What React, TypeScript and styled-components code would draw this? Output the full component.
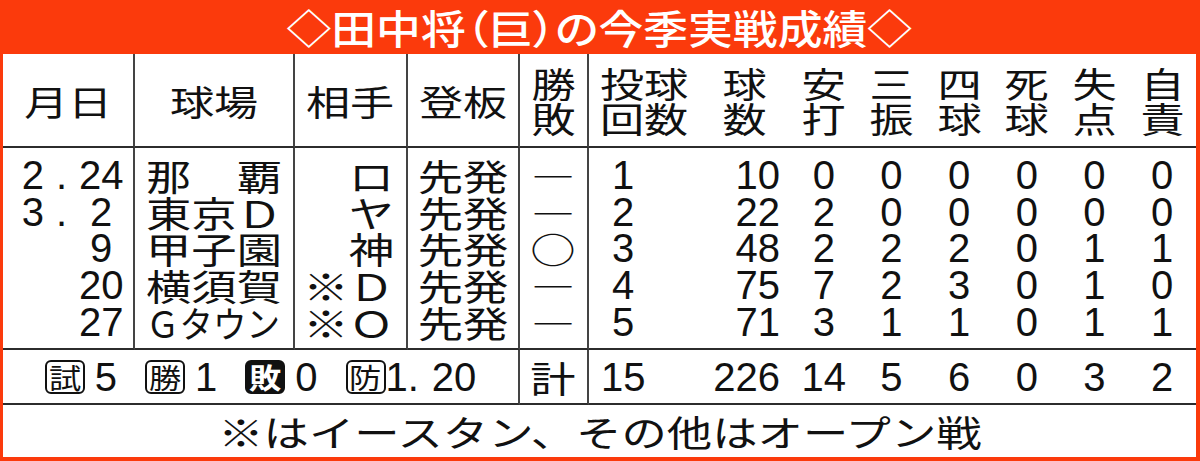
import React from 'react';
import styled, { createGlobalStyle } from 'styled-components';

const RED = '#fb3a0c';
const INK = '#111';
const RULE = '#2c2c2c';
const RULE_V = '#444';

const GlobalStyle = createGlobalStyle`
	*, *::before, *::after {
		box-sizing: border-box;
	}
	html, body {
		margin: 0;
		padding: 0;
		background: #fff;
	}
	body {
		font-family: 'Liberation Sans', 'Noto Sans CJK JP', sans-serif;
	}
`;

type Align = 'left' | 'right' | 'center';

type Game = {
	month?: string;
	day: string;
	park: string;
	parkFit?: number;
	opp: string;
	role: string;
	result: string;
	ip: string;
	pitches: string;
	hits: string;
	so: string;
	bb: string;
	hbp: string;
	runs: string;
	er: string;
};

const games: Game[] = [
	{ month: '2', day: '24', park: '那　覇', opp: 'ロ', role: '先発', result: '―', ip: '1', pitches: '10', hits: '0', so: '0', bb: '0', hbp: '0', runs: '0', er: '0' },
	{ month: '3', day: '2', park: '東京Ｄ', opp: 'ヤ', role: '先発', result: '―', ip: '2', pitches: '22', hits: '2', so: '0', bb: '0', hbp: '0', runs: '0', er: '0' },
	{ day: '9', park: '甲子園', opp: '神', role: '先発', result: '○', ip: '3', pitches: '48', hits: '2', so: '2', bb: '2', hbp: '0', runs: '1', er: '1' },
	{ day: '20', park: '横須賀', opp: '※Ｄ', role: '先発', result: '―', ip: '4', pitches: '75', hits: '7', so: '2', bb: '3', hbp: '0', runs: '1', er: '0' },
	{ day: '27', park: 'Ｇタウン', parkFit: 0.93, opp: '※Ｏ', role: '先発', result: '―', ip: '5', pitches: '71', hits: '3', so: '1', bb: '1', hbp: '0', runs: '1', er: '1' },
];

const totals = { ip: '15', pitches: '226', hits: '14', so: '5', bb: '6', hbp: '0', runs: '3', er: '2' };

const headers: string[][] = [
	['月日'],
	['球場'],
	['相手'],
	['登板'],
	['勝', '敗'],
	['投球', '回数'],
	['球', '数'],
	['安', '打'],
	['三', '振'],
	['四', '球'],
	['死', '球'],
	['失', '点'],
	['自', '責'],
];

const statKeys = ['hits', 'so', 'bb', 'hbp', 'runs', 'er'] as const;

const Frame = styled.div`
	width: 1200px;
	height: 461px;
	background: ${RED};
	padding: 0 4px 4px 3px;
	display: flex;
	flex-direction: column;
`;

const Banner = styled.div`
	flex: none;
	height: 54px;
	display: flex;
	align-items: center;
	justify-content: center;
	color: #fff;
	font-size: 40px;
	line-height: 54px;
	font-weight: 500;
	font-feature-settings: 'palt';
`;

const Sheet = styled.div`
	flex: 1;
	background: #fff;
	color: ${INK};
	display: grid;
	grid-template-columns: 132px 160px 113px 112px 69px 111px 90px repeat(6, 1fr);
	grid-template-rows: 94px 45.7px repeat(3, 36.7px) 46.7px 55px 1fr;
`;

// 平体: the paper sets its Japanese type stretched sideways
const Flat = styled.span<{ $sx?: number; $from?: Align }>`
	display: inline-block;
	font-family: 'Noto Sans CJK JP', sans-serif;
	white-space: nowrap;
	transform: scaleX(${(p) => p.$sx ?? 1.26});
	transform-origin: ${(p) => p.$from ?? 'center'};
`;

const HeadCell = styled.div<{ $ruled?: boolean }>`
	display: flex;
	align-items: center;
	justify-content: center;
	border-bottom: 2px solid ${RULE};
	border-right: ${(p) => (p.$ruled ? `2px solid ${RULE_V}` : 'none')};
`;

const HeadText = styled(Flat)`
	font-size: 35px;
	line-height: 35px;
	text-align: center;
`;

const DataCell = styled.div<{
	$align: Align;
	$ruled?: boolean;
	$first?: boolean;
	$last?: boolean;
	$inset?: number;
}>`
	text-align: ${(p) => p.$align};
	font-size: 40px;
	line-height: 36.7px;
	white-space: nowrap;
	padding-top: ${(p) => (p.$first ? 9 : 0)}px;
	padding-bottom: ${(p) => (p.$last ? 8 : 0)}px;
	padding-left: ${(p) => (p.$align === 'left' ? p.$inset ?? 0 : 0)}px;
	padding-right: ${(p) => (p.$align === 'right' ? p.$inset ?? 0 : 0)}px;
	border-right: ${(p) => (p.$ruled ? `2px solid ${RULE_V}` : 'none')};
	border-bottom: ${(p) => (p.$last ? `2px solid ${RULE}` : 'none')};

	${Flat} {
		font-size: 36px;
		vertical-align: 2px;
	}
`;

const Dot = styled.span`
	display: inline-block;
	width: 35px;
	text-align: center;
`;

const Slot = styled.span`
	display: inline-block;
	width: 44px;
	text-align: center;
`;

const Point = styled.span`
	display: inline-block;
	width: 24px;
	text-align: left;
`;

const SumCell = styled.div<{ $align: Align; $ruled?: boolean; $inset?: number; $span?: number }>`
	grid-column: ${(p) => (p.$span ? `span ${p.$span}` : 'auto')};
	display: flex;
	align-items: center;
	justify-content: ${(p) => (p.$align === 'left' ? 'flex-start' : p.$align === 'right' ? 'flex-end' : 'center')};
	padding-left: ${(p) => (p.$align === 'left' ? p.$inset ?? 0 : 0)}px;
	padding-right: ${(p) => (p.$align === 'right' ? p.$inset ?? 0 : 0)}px;
	font-size: 40px;
	line-height: 40px;
	white-space: nowrap;
	border-bottom: 2px solid ${RULE};
	border-right: ${(p) => (p.$ruled ? `2px solid ${RULE_V}` : 'none')};

	${Flat} {
		font-size: 36px;
	}
`;

const Record = styled.div`
	display: flex;
	align-items: center;
	gap: 28px;
`;

const Stat = styled.span<{ $tight?: boolean }>`
	display: inline-flex;
	align-items: center;
	gap: ${(p) => (p.$tight ? 0 : 10)}px;
`;

const Badge = styled.span<{ $inverse?: boolean }>`
	display: inline-flex;
	align-items: center;
	justify-content: center;
	width: 40px;
	height: 34px;
	border: 2px solid ${INK};
	border-radius: 6px;
	background: ${(p) => (p.$inverse ? INK : 'transparent')};
	color: ${(p) => (p.$inverse ? '#fff' : INK)};
	font-family: 'Noto Sans CJK JP', sans-serif;
	font-size: 28px;
	line-height: 28px;
	font-weight: ${(p) => (p.$inverse ? 700 : 400)};

	${Flat} {
		font-size: 28px;
	}
`;

const Note = styled.div`
	grid-column: 1 / -1;
	display: flex;
	align-items: center;
	justify-content: center;
	font-size: 36px;
	line-height: 36px;
`;

const GameRow = ({ g, first, last }: { g: Game; first?: boolean; last?: boolean }) => {
	const edge = { $first: first, $last: last };
	return (
		<>
			<DataCell $align='right' $inset={10} $ruled {...edge}>
				{g.month && (
					<>
						{g.month}
						<Dot>.</Dot>
					</>
				)}
				<Slot>{g.day}</Slot>
			</DataCell>
			<DataCell $align='left' $inset={11} $ruled {...edge}>
				<Flat $from='left' $sx={g.parkFit}>
					{g.park}
				</Flat>
			</DataCell>
			<DataCell $align='right' $inset={12} $ruled {...edge}>
				<Flat $from='right'>{g.opp}</Flat>
			</DataCell>
			<DataCell $align='center' $ruled {...edge}>
				<Flat>{g.role}</Flat>
			</DataCell>
			<DataCell $align='center' $ruled {...edge}>
				<Flat $sx={g.result === '―' ? 1.2 : 1.26}>{g.result}</Flat>
			</DataCell>
			<DataCell $align='left' $inset={12} {...edge}>
				<Slot>{g.ip}</Slot>
			</DataCell>
			<DataCell $align='right' $inset={10} {...edge}>
				{g.pitches}
			</DataCell>
			{statKeys.map((k) => (
				<DataCell key={k} $align='center' {...edge}>
					{g[k]}
				</DataCell>
			))}
		</>
	);
};

const App = () => {
	return (
		<>
			<GlobalStyle />
			<Frame>
				<Banner>
					<Flat $sx={1.12}>◇田中将（巨）の今季実戦成績◇</Flat>
				</Banner>
				<Sheet>
					{headers.map((lines, i) => (
						<HeadCell key={lines.join('')} $ruled={i < 5}>
							<HeadText>
								{lines.map((line) => (
									<div key={line}>{line}</div>
								))}
							</HeadText>
						</HeadCell>
					))}

					{games.map((g, i) => (
						<GameRow
							key={`${g.month ?? ''}${g.day}`}
							g={g}
							first={i === 0}
							last={i === games.length - 1}
						/>
					))}

					<SumCell $align='center' $span={4} $ruled>
						<Record>
							<Stat>
								<Badge>
									<Flat $sx={1.15}>試</Flat>
								</Badge>
								5
							</Stat>
							<Stat>
								<Badge>
									<Flat $sx={1.15}>勝</Flat>
								</Badge>
								1
							</Stat>
							<Stat>
								<Badge $inverse>
									<Flat $sx={1.15}>敗</Flat>
								</Badge>
								0
							</Stat>
							<Stat $tight>
								<Badge>
									<Flat $sx={1.15}>防</Flat>
								</Badge>
								1<Point>.</Point>20
							</Stat>
						</Record>
					</SumCell>
					<SumCell $align='center' $ruled>
						<Flat>計</Flat>
					</SumCell>
					<SumCell $align='left' $inset={12}>
						<Slot>{totals.ip}</Slot>
					</SumCell>
					<SumCell $align='right' $inset={10}>
						{totals.pitches}
					</SumCell>
					{statKeys.map((k) => (
						<SumCell key={k} $align='center'>
							{totals[k]}
						</SumCell>
					))}

					<Note>
						<Flat>※はイースタン、その他はオープン戦</Flat>
					</Note>
				</Sheet>
			</Frame>
		</>
	);
};

export default App;
